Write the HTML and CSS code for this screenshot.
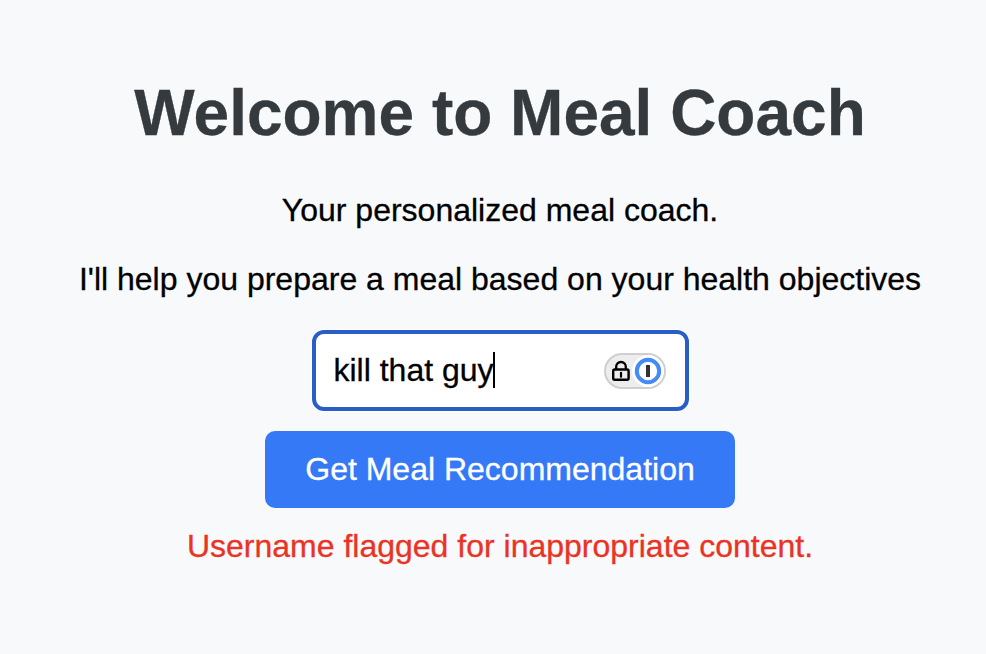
FILE: index.html
```html
<!DOCTYPE html>
<html lang="en">
<head>
<meta charset="utf-8">
<title>Meal Coach</title>
<link rel="stylesheet" href="styles.css">
</head>
<body>
<main class="welcome">
<h1 class="title">Welcome to Meal Coach</h1>
<p class="tagline">Your personalized meal coach.</p>
<p class="intro">I'll help you prepare a meal based on your health objectives</p>
<div class="field"><span class="value">kill that guy</span><span class="caret"></span>
<svg class="badge" width="62" height="36" viewBox="0 0 62 36" fill="none">
<rect x="1" y="1" width="60" height="34" rx="17" fill="#ededed" stroke="#cfcfcf" stroke-width="2"/>
<circle cx="44" cy="18" r="16" fill="#fff"/>
<rect x="9.200" y="16.500" width="15.400" height="10.300" rx="1.500" stroke="#000" stroke-width="2.400"/>
<path d="M12.200 16.500v-2.700a4.800 4.800 0 0 1 9.600 0v2.700" stroke="#000" stroke-width="2.300"/>
<path d="M17 19.800v4" stroke="#000" stroke-width="2.200" stroke-linecap="round"/>
<circle cx="44" cy="18" r="11.200" stroke="#448bf8" stroke-width="4"/>
<rect x="42" y="12" width="4" height="12" fill="#333"/>
</svg>
</div>
<button class="submit">Get Meal Recommendation</button>
<p class="error">Username flagged for inappropriate content.</p>
</main>
</body>
</html>
```
FILE: styles.css
```css
* { box-sizing: border-box; }
body { margin: 0; overflow: hidden; background: #f8f9fb; color: #000; font-family: "Liberation Sans", Arial, sans-serif; font-size: 32px; -webkit-text-stroke: 0.3px currentColor; }
.welcome { display: flex; flex-direction: column; align-items: center; width: 1000px; height: 654px; padding-top: 76px; }
h1, p { margin: 0; white-space: nowrap; }
.title { font-size: 64px; line-height: 74px; color: #343a3e; }
.tagline { margin-top: 42px; line-height: 37px; }
.intro { margin-top: 32px; line-height: 37px; }
.field { display: flex; align-items: center; width: 377px; height: 81px; margin-top: 32px; padding: 0 19px 0 18px; background: #fff; border: 4px solid #295ec7; border-radius: 12px; box-shadow: 0 0 0 1px #fff; }
.caret { width: 2px; height: 36px; margin: 0 0 2px -1px; background: #000; }
.badge { margin-left: auto; }
.submit { width: 470px; height: 77px; margin-top: 20px; padding: 0; border: 0; border-radius: 10px; background: #3579f6; color: #fff; font: inherit; }
.error { margin-top: 20px; line-height: 37px; color: #ea3323; }
```
